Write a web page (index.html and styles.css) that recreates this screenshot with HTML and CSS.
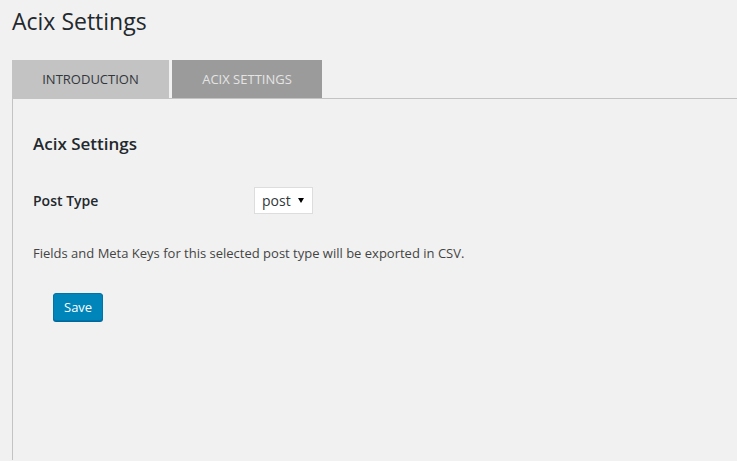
FILE: index.html
```html
<!DOCTYPE html>
<html>
<head>
<meta charset="utf-8">
<title>Acix Settings</title>
<link rel="stylesheet" href="styles.css">
</head>
<body>
<div class="wrap">
  <h1 class="page-title">Acix Settings</h1>
  <div class="tabs">
    <div class="tab tab-intro">INTRODUCTION</div>
    <div class="tab tab-settings">ACIX SETTINGS</div>
  </div>
  <div class="panel">
    <h2 class="section-title">Acix Settings</h2>
    <div class="field-row">
      <label class="field-label">Post Type</label>
      <div class="select">
        <span class="select-value">post</span>
        <span class="select-arrow"></span>
      </div>
    </div>
    <p class="description">Fields and Meta Keys for this selected post type will be exported in CSV.</p>
    <button class="button-primary" type="button">Save</button>
  </div>
</div>
</body>
</html>
```

FILE: styles.css
```css
html, body {
  margin: 0;
  padding: 0;
  background: #f1f1f1;
  height: 100%;
  overflow: hidden;
}
body {
  font-family: "Open Sans", "Noto Sans", sans-serif;
  color: #444;
}
.wrap {
  padding-left: 12px;
}
.page-title {
  margin: 0;
  padding-top: 7px;
  font-size: 23px;
  line-height: 29px;
  font-weight: 400;
  color: #23282d;
}
.tabs {
  display: flex;
  gap: 3px;
  margin-top: 24px;
}
.tab {
  height: 38px;
  display: flex;
  align-items: center;
  justify-content: center;
  font-size: 13px;
  line-height: 38px;
}
.tab-intro {
  width: 157px;
  background: #c3c3c3;
  color: #32373c;
}
.tab-settings {
  width: 150px;
  background: #9b9b9b;
  color: #e4e4e4;
}
.panel {
  border-top: 1px solid #c3c3c3;
  border-left: 1px solid #c3c3c3;
  padding: 0 20px;
  height: 361px;
}
.section-title {
  margin: 34px 0 0;
  font-size: 17px;
  line-height: 22px;
  font-weight: 600;
  color: #23282d;
}
.field-row {
  display: flex;
  align-items: center;
  margin-top: 32px;
}
.field-label {
  width: 221px;
  font-size: 14px;
  line-height: 27px;
  font-weight: 600;
  color: #23282d;
}
.select {
  box-sizing: border-box;
  width: 59px;
  height: 27px;
  border: 1px solid #ddd;
  background: #fff;
  display: flex;
  align-items: center;
  padding-left: 7px;
  font-size: 14px;
  color: #32373c;
}
.select-value {
  flex: 1;
}
.select-arrow {
  width: 0;
  height: 0;
  border-left: 3px solid transparent;
  border-right: 3px solid transparent;
  border-top: 5px solid #000;
  margin-right: 8px;
}
.description {
  margin: 29px 0 0;
  font-size: 13px;
  line-height: 20px;
  color: #444;
}
.button-primary {
  display: block;
  margin: 30px 0 0 20px;
  box-sizing: border-box;
  height: 28px;
  padding: 0 10px 1px;
  font-family: "Open Sans", "Noto Sans", sans-serif;
  font-size: 13px;
  line-height: 26px;
  color: #fff;
  background: #0085ba;
  border: 1px solid #0073aa;
  border-radius: 3px;
  box-shadow: 0 1px 0 #006799;
}
```
